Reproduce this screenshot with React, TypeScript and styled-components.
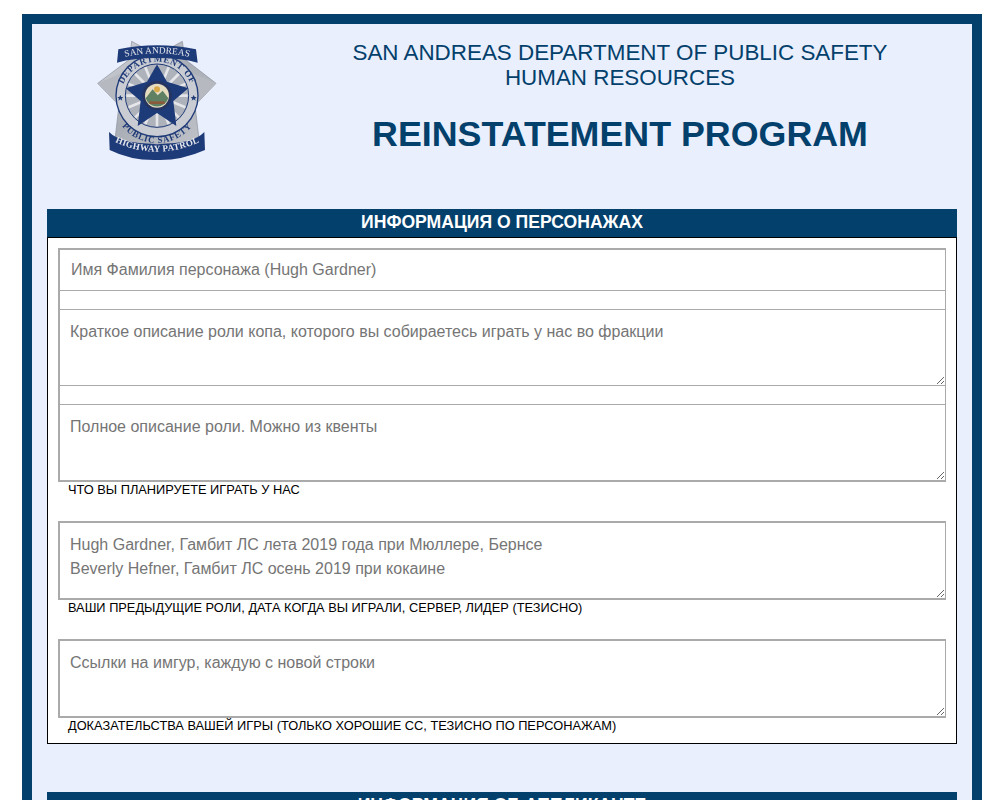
import styled, { createGlobalStyle } from "styled-components";

const GlobalStyle = createGlobalStyle`
  html, body {
    margin: 0;
    height: 800px;
    overflow: hidden;
    background: #fff;
    font-family: "Liberation Sans", Arial, sans-serif;
  }
`;

const Frame = styled.div`
  box-sizing: border-box;
  width: 960px;
  margin: 14px 0 0 22px;
  padding: 0 15px;
  border: 10px solid #03406b;
  background: #e9effd;
`;

const Header = styled.header`
  display: grid;
  grid-template-columns: 236px 1fr;
  height: 185px;
`;

const LogoCell = styled.div`
  padding: 6px 0 0 34px;
`;

const TitleCell = styled.div`
  display: flex;
  flex-direction: column;
  align-items: center;
  padding-top: 16px;
  color: #03406b;
`;

const Agency = styled.div`
  font-size: 22.4px;
  line-height: 25px;
  text-align: center;
`;

const Program = styled.h1`
  margin: 24px 0 0;
  font-size: 35.8px;
  line-height: 41px;
  font-weight: 700;
`;

const Section = styled.section`
  margin-bottom: 48px;
`;

const SectionTitle = styled.h2`
  margin: 0;
  height: 28px;
  background: #03406b;
  color: #fff;
  font-size: 17.6px;
  line-height: 26px;
  font-weight: 700;
  text-align: center;
`;

const SectionBody = styled.div`
  box-sizing: border-box;
  height: 507px;
  padding: 10px;
  border: 1px solid #000;
  background: #fff;
`;

const TextInput = styled.input`
  display: block;
  box-sizing: border-box;
  width: 100%;
  height: 43px;
  padding: 0 11px;
  border: solid #aaa;
  border-width: 2px 1px 1px 2px;
  border-radius: 0;
  outline: none;
  background: #fff;
  font: 16px "Liberation Sans", Arial, sans-serif;
  &::placeholder {
    color: #757575;
    opacity: 1;
  }
`;

const TextArea = styled.textarea<{ $height: number; $top: number; $bottom: number }>`
  display: block;
  box-sizing: border-box;
  width: 100%;
  height: ${(p) => p.$height}px;
  margin: 0;
  padding: 10px 10px 0;
  border: solid #aaa;
  border-width: ${(p) => p.$top}px 1px ${(p) => p.$bottom}px 2px;
  border-radius: 0;
  outline: none;
  background: #fff;
  font: 16px/24px "Liberation Sans", Arial, sans-serif;
  resize: vertical;
  &::placeholder {
    color: #757575;
    opacity: 1;
  }
`;

const Joint = styled.div`
  height: 18px;
  border: solid #aaa;
  border-width: 0 1px 0 2px;
`;

const Hint = styled.div<{ $gap?: number }>`
  height: ${(p) => p.$gap ?? 39}px;
  padding: 0 0 0 10px;
  color: #000;
  font-size: 12.8px;
  line-height: 15px;
`;

function Badge() {
  return (
    <svg width="150" height="135" viewBox="0 0 450 405" style={{ display: "block" }}>
      <defs>
        <filter id="soft">
          <feGaussianBlur stdDeviation="0.9" />
        </filter>
        <linearGradient id="silver" x1="0" y1="0" x2="1" y2="1">
          <stop offset="0" stopColor="#d4d7dc" />
          <stop offset="0.5" stopColor="#a9adb5" />
          <stop offset="1" stopColor="#c3c6cc" />
        </linearGradient>
        <path id="arcTop" d="M118 205 A110 110 0 0 1 338 205" />
        <path id="arcBottom" d="M94 205 A134 134 0 0 0 362 205" />
        <path id="ribbonTop" d="M135 80 Q228 60 322 80" />
        <path id="ribbonBottom" d="M106 338 Q228 392 352 338" />
      </defs>
      <g filter="url(#soft)">
        <polygon
          points="152,34 200,60 256,60 304,34 312,88 405,160 342,226 356,345 228,340 100,345 114,226 50,160 146,88"
          fill="url(#silver)"
          stroke="#8b8f98"
          strokeWidth="2"
        />
        <polygon points="50,160 146,120 114,226" fill="#b6b9c0" />
        <polygon points="405,160 312,120 342,226" fill="#b6b9c0" />
        <circle cx="228" cy="197" r="125" fill="#1f3a78" />
        <circle cx="228" cy="197" r="121" fill="#c9ccd3" />
        <circle cx="228" cy="197" r="95" fill="#aeb2ba" stroke="#1f3a78" strokeWidth="3" />
        <g stroke="#e4e6ea" strokeWidth="8">
          <line x1="228" y1="105" x2="228" y2="289" />
          <line x1="136" y1="197" x2="320" y2="197" />
          <line x1="163" y1="132" x2="293" y2="262" />
          <line x1="293" y1="132" x2="163" y2="262" />
          <line x1="193" y1="112" x2="263" y2="282" />
          <line x1="263" y1="112" x2="193" y2="282" />
          <line x1="143" y1="162" x2="313" y2="232" />
          <line x1="313" y1="162" x2="143" y2="232" />
        </g>
        <polygon
          points="228,103 258,155 322,175 277,213 286,288 228,249 170,288 179,213 134,175 198,155"
          fill="#1f3a78"
        />
        <circle cx="228" cy="197" r="44" fill="#27345f" />
        <circle cx="228" cy="197" r="36" fill="#e6dcc0" />
        <path d="M194 205 L215 178 L230 196 L245 182 L262 205 A36 36 0 0 1 194 205 Z" fill="#5f8062" />
        <circle cx="228" cy="178" r="9" fill="#d9a94a" />
        <rect x="205" y="214" width="46" height="8" fill="#8a5a3a" />
        <text fontFamily="'Liberation Serif', serif" fontWeight="700" fontSize="27" fill="#1f3a78" letterSpacing="2">
          <textPath href="#arcTop" startOffset="50%" textAnchor="middle">DEPARTMENT OF</textPath>
        </text>
        <text fontFamily="'Liberation Serif', serif" fontWeight="700" fontSize="27" fill="#1f3a78" letterSpacing="2">
          <textPath href="#arcBottom" startOffset="50%" textAnchor="middle">PUBLIC SAFETY</textPath>
        </text>
        <polygon points="118,195 121,201 127,202 122,206 124,212 118,208 112,212 114,206 109,202 115,201" fill="#1f3a78" />
        <polygon points="338,195 341,201 347,202 342,206 344,212 338,208 332,212 334,206 329,202 335,201" fill="#1f3a78" />
        <path d="M112 58 Q228 34 345 58 L350 98 Q300 84 228 84 Q156 84 108 98 Z" fill="#1f3a78" />
        <path d="M84 306 Q100 322 135 333 Q228 352 322 333 Q355 322 370 306 L372 360 Q300 392 228 390 Q150 392 86 360 Z" fill="#1f3a78" />
        <text fontFamily="'Liberation Serif', serif" fontSize="28" fill="#e6e8ee">
          <textPath href="#ribbonTop" startOffset="50%" textAnchor="middle">SAN ANDREAS</textPath>
        </text>
        <text fontFamily="'Liberation Serif', serif" fontWeight="700" fontSize="27" fill="#e6e8ee" letterSpacing="1">
          <textPath href="#ribbonBottom" startOffset="50%" textAnchor="middle">HIGHWAY PATROL</textPath>
        </text>
      </g>
    </svg>
  );
}

export default function App() {
  return (
    <>
      <GlobalStyle />
      <Frame>
        <Header>
          <LogoCell>
            <Badge />
          </LogoCell>
          <TitleCell>
            <Agency>
              SAN ANDREAS DEPARTMENT OF PUBLIC SAFETY
              <br />
              HUMAN RESOURCES
            </Agency>
            <Program>REINSTATEMENT PROGRAM</Program>
          </TitleCell>
        </Header>
        <Section>
          <SectionTitle>ИНФОРМАЦИЯ О ПЕРСОНАЖАХ</SectionTitle>
          <SectionBody>
            <TextInput placeholder="Имя Фамилия персонажа (Hugh Gardner)" />
            <Joint />
            <TextArea
              $height={77}
              $top={1}
              $bottom={1}
              placeholder="Краткое описание роли копа, которого вы собираетесь играть у нас во фракции"
            />
            <Joint />
            <TextArea
              $height={78}
              $top={1}
              $bottom={2}
              placeholder="Полное описание роли. Можно из квенты"
            />
            <Hint>ЧТО ВЫ ПЛАНИРУЕТЕ ИГРАТЬ У НАС</Hint>
            <TextArea
              $height={79}
              $top={2}
              $bottom={2}
              placeholder={"Hugh Gardner, Гамбит ЛС лета 2019 года при Мюллере, Бернсе\nBeverly Hefner, Гамбит ЛС осень 2019 при кокаине"}
            />
            <Hint>ВАШИ ПРЕДЫДУЩИЕ РОЛИ, ДАТА КОГДА ВЫ ИГРАЛИ, СЕРВЕР, ЛИДЕР (ТЕЗИСНО)</Hint>
            <TextArea
              $height={79}
              $top={2}
              $bottom={2}
              placeholder="Ссылки на имгур, каждую с новой строки"
            />
            <Hint $gap={15}>ДОКАЗАТЕЛЬСТВА ВАШЕЙ ИГРЫ (ТОЛЬКО ХОРОШИЕ СС, ТЕЗИСНО ПО ПЕРСОНАЖАМ)</Hint>
          </SectionBody>
        </Section>
        <Section>
          <SectionTitle>ИНФОРМАЦИЯ ОБ АППЛИКАНТЕ</SectionTitle>
        </Section>
      </Frame>
    </>
  );
}
